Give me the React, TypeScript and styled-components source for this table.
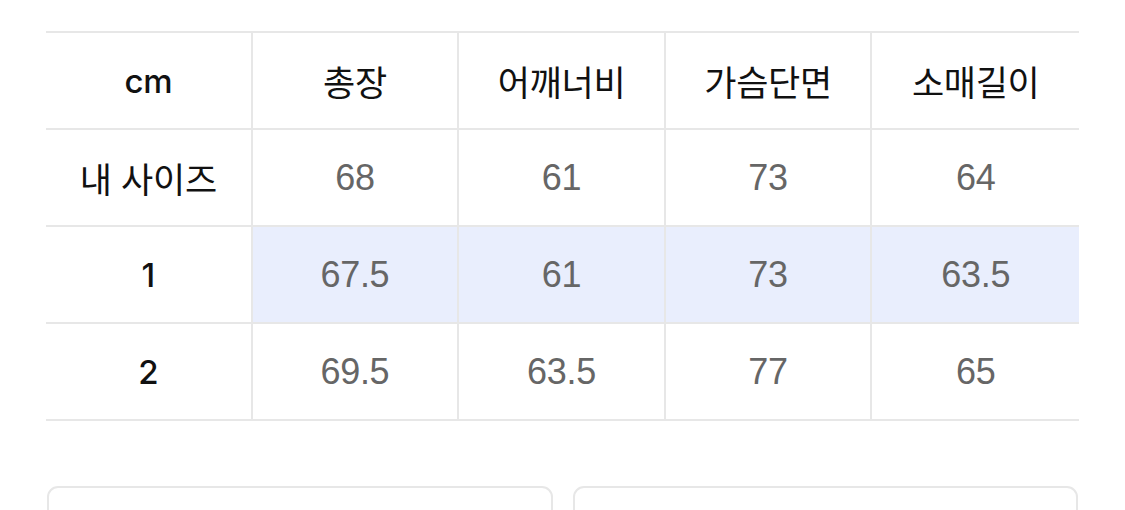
import styled, {createGlobalStyle} from "styled-components";
import React from "react";

const GlobalStyle = createGlobalStyle`
  html, body {
    margin: 0;
    padding: 0;
    background: #ffffff;
  }

  body {
    font-family: "Liberation Sans", "Noto Sans CJK KR", sans-serif;
  }
`;

interface SizeRow {
  label: string;
  values: string[];
  highlighted?: boolean;
}

const headers = ["총장", "어깨너비", "가슴단면", "소매길이"];

const rows: SizeRow[] = [
  {label: "내 사이즈", values: ["68", "61", "73", "64"]},
  {label: "1", values: ["67.5", "61", "73", "63.5"], highlighted: true},
  {label: "2", values: ["69.5", "63.5", "77", "65"]},
];

const LINE = "#e7e7e7";

// latin labels ("cm", "1", "2") are drawn a touch heavier than the hangul ones
const isLatin = (text: string) => /^[A-Za-z0-9.]+$/.test(text);

export default function App() {
  return (
    <>
      <GlobalStyle />
      <Page id="size-page">
        <SizeTable id="size-table">
          <Cell $kind="label" $latin>
            cm
          </Cell>
          {headers.map((h, i) => (
            <Cell key={h} $kind="label" $last={i === headers.length - 1}>
              {h}
            </Cell>
          ))}

          {rows.map((row) => (
            <React.Fragment key={row.label}>
              <Cell $kind="label" $latin={isLatin(row.label)}>
                {row.label}
              </Cell>
              {row.values.map((v, i) => (
                <Cell
                  key={i}
                  $kind="value"
                  $highlighted={row.highlighted}
                  $last={i === row.values.length - 1}
                >
                  {v}
                </Cell>
              ))}
            </React.Fragment>
          ))}
        </SizeTable>

        <CardRow id="card-row">
          <Card />
          <Card />
        </CardRow>
      </Page>
    </>
  );
}

const Page = styled.div`
  display: flex;
  flex-direction: column;
  padding: 31px 46px 0 46px;
  height: 510px;
  box-sizing: border-box;
  overflow: hidden;
`;

const SizeTable = styled.div`
  display: grid;
  grid-template-columns: repeat(5, 1fr);
  grid-auto-rows: 97px;
  border-top: 2px solid ${LINE};
`;

const Cell = styled.div<{
  $kind: "label" | "value";
  $latin?: boolean;
  $highlighted?: boolean;
  $last?: boolean;
}>`
  display: flex;
  align-items: center;
  justify-content: center;
  box-sizing: border-box;
  border-bottom: 2px solid ${LINE};
  border-right: ${({$last}) => ($last ? "none" : `2px solid ${LINE}`)};
  background: ${({$highlighted}) => ($highlighted ? "#e9eefd" : "#ffffff")};
  color: ${({$kind}) => ($kind === "value" ? "#666666" : "#111111")};
  font-family: ${({$latin}) =>
    $latin
      ? `"Inter", "Noto Sans CJK KR", sans-serif`
      : `"Liberation Sans", "Noto Sans CJK KR", sans-serif`};
  font-size: ${({$kind, $latin}) =>
    $kind === "value" ? "36px" : $latin ? "33px" : "35px"};
  font-weight: ${({$latin}) => ($latin ? 500 : 400)};
  letter-spacing: -0.3px;
`;

const CardRow = styled.div`
  display: grid;
  grid-template-columns: 1fr 1fr;
  column-gap: 20px;
  margin-top: 65px;
  padding: 0 1px;
`;

const Card = styled.div`
  height: 120px;
  border: 2px solid ${LINE};
  border-radius: 11px;
  background: #ffffff;
`;
